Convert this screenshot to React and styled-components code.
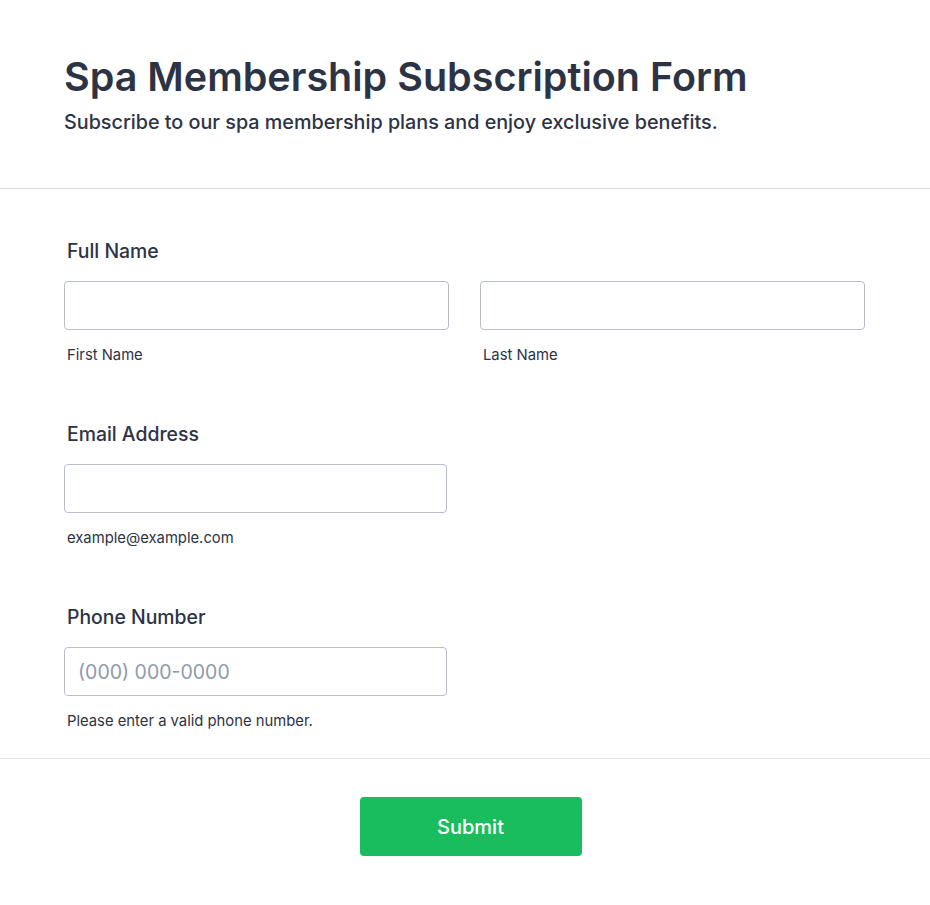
import React from "react";
import styled, { createGlobalStyle } from "styled-components";

const Global = createGlobalStyle`
  html, body { margin: 0; padding: 0; background: #fff; }
  body { font-family: Inter, "Noto Sans", sans-serif; color: #2c3345; }
  * { box-sizing: border-box; }
`;

const Page = styled.div`
  width: 930px;
  background: #fff;
`;

const Header = styled.header`
  padding: 53px 64px 51px;
  border-bottom: 1px solid #d8dde9;
`;

const Title = styled.h1`
  margin: 0;
  font-size: 39.5px;
  line-height: 48px;
  font-weight: 600;
  color: #2c3345;
`;

const Subtitle = styled.p`
  margin: 6px 0 0;
  font-size: 19.75px;
  line-height: 30px;
  font-weight: 500;
  color: #2c3345;
`;

const Body = styled.div`
  padding: 48px 64px 21px;
  border-bottom: 1px solid #e6e7f3;
  display: flex;
  flex-direction: column;
  gap: 49px;
`;

const Field = styled.div`
  display: flex;
  flex-direction: column;
`;

const Label = styled.label`
  font-size: 19.4px;
  line-height: 28px;
  font-weight: 500;
  margin: 0 0 16px 3px;
  color: #2c3345;
`;

const Row = styled.div`
  display: grid;
  grid-template-columns: ${(p) => p.$cols};
  column-gap: 31px;
`;

const Cell = styled.div`
  display: flex;
  flex-direction: column;
`;

const Input = styled.input`
  height: 49px;
  width: 100%;
  border: 1px solid #b8bdc9;
  border-radius: 4px;
  padding: 0 13px;
  font-family: Inter, sans-serif;
  font-size: 19.5px;
  color: #2c3345;
  background: #fff;
  outline: none;
  &::placeholder { color: #8e9aae; }
`;

const Sub = styled.span`
  margin: 9px 0 0 3px;
  font-size: 14.8px;
  line-height: 32px;
  color: #2c3345;
`;

const Footer = styled.div`
  display: flex;
  justify-content: center;
  padding: 38px 0 50px 11px;
`;

const Button = styled.button`
  width: 222px;
  height: 59px;
  border: none;
  border-radius: 4px;
  background: #1abd5e;
  color: #fff;
  font-family: Inter, sans-serif;
  font-size: 20px;
  font-weight: 500;
  cursor: pointer;
`;

export default function App() {
  return (
    <Page>
      <Global />
      <Header>
        <Title>Spa Membership Subscription Form</Title>
        <Subtitle>Subscribe to our spa membership plans and enjoy exclusive benefits.</Subtitle>
      </Header>
      <Body>
        <Field>
          <Label>Full Name</Label>
          <Row $cols="385px 385px">
            <Cell>
              <Input type="text" />
              <Sub>First Name</Sub>
            </Cell>
            <Cell>
              <Input type="text" />
              <Sub>Last Name</Sub>
            </Cell>
          </Row>
        </Field>
        <Field>
          <Label>Email Address</Label>
          <Row $cols="383px">
            <Cell>
              <Input type="email" />
              <Sub>example@example.com</Sub>
            </Cell>
          </Row>
        </Field>
        <Field>
          <Label>Phone Number</Label>
          <Row $cols="383px">
            <Cell>
              <Input type="tel" placeholder="(000) 000-0000" />
              <Sub>Please enter a valid phone number.</Sub>
            </Cell>
          </Row>
        </Field>
      </Body>
      <Footer>
        <Button>Submit</Button>
      </Footer>
    </Page>
  );
}
